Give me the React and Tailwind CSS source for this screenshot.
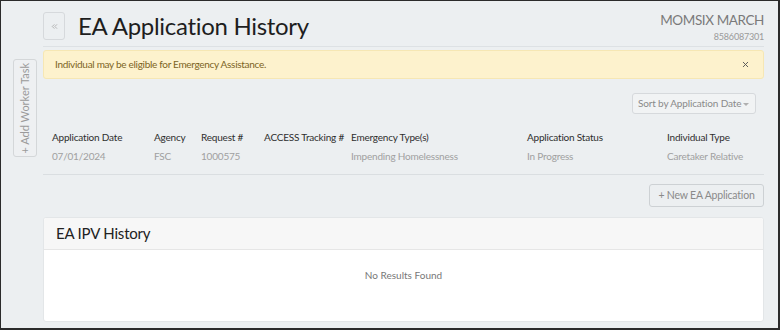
import { X, ChevronsLeft } from "lucide-react";

const columns = [
  { label: "Application Date", value: "07/01/2024", w: "w-[102px]" },
  { label: "Agency", value: "FSC", w: "w-[47px]" },
  { label: "Request #", value: "1000575", w: "w-[63px]" },
  { label: "ACCESS Tracking #", value: "", w: "w-[87px]" },
  { label: "Emergency Type(s)", value: "Impending Homelessness", w: "w-[176px]" },
  { label: "Application Status", value: "In Progress", w: "w-[140px]" },
  { label: "Individual Type", value: "Caretaker Relative", w: "w-[96px]" },
];

const App = () => {
  return (
    <div
      className="w-[780px] h-[330px] overflow-hidden bg-[#eceff1] border-t border-l border-r-2 border-b-2 border-[#2b2b2b] flex"
      style={{ fontFamily: "Lato, 'Open Sans', sans-serif" }}
    >
      {/* side tab */}
      <div className="w-[42px] shrink-0 pl-[12px] pt-[58px]">
        <button className="w-[24px] h-[98px] border border-[#d4d7d9] rounded-[3px] bg-[#eef0f2] flex items-center justify-center">
          <span className="-rotate-90 whitespace-nowrap text-[11px] text-[#9a9a9a]">+ Add Worker Task</span>
        </button>
      </div>

      <div className="flex-1 pr-[14px] pt-[11px]">
        {/* header */}
        <div className="flex justify-between items-start border-b border-[#dde1e4] pb-[3px]">
          <div className="flex items-center gap-[13px]">
            <button className="w-[22px] h-[28px] border border-[#d6d9dc] rounded-[3px] flex items-center justify-center text-[#a0a0a0]">
              <ChevronsLeft size={9} strokeWidth={2} />
            </button>
            <h1 className="text-[24px] leading-[28px] tracking-[-0.3px] text-[#1e1e1e]">EA Application History</h1>
          </div>
          <div className="text-right">
            <div className="text-[13.5px] leading-[16px] tracking-[-0.4px] text-[#7a7a7a]">MOMSIX MARCH</div>
            <div className="text-[9px] leading-[12px] tracking-[-0.2px] text-[#9a9a9a] mt-[3px]">8586087301</div>
          </div>
        </div>

        {/* alert */}
        <div className="mt-[3px] h-[29px] bg-[#fdf2cd] border border-[#f6e7b4] rounded-[3px] flex items-center justify-between pl-[11px] pr-[13px]">
          <span className="text-[10px] tracking-[-0.3px] text-[#7c6424]">Individual may be eligible for Emergency Assistance.</span>
          <X size={9} strokeWidth={2.5} className="text-[#555]" />
        </div>

        {/* sort */}
        <div className="flex justify-end mt-[14px] pr-[8px]">
          <div className="h-[21px] w-[124px] border border-[#d6d9dc] rounded-[3px] bg-[#f1f3f4] flex items-center justify-between pl-[5px] pr-[6px]">
            <span className="text-[10px] tracking-[-0.15px] text-[#8a8a8a] whitespace-nowrap">Sort by Application Date</span>
            <span className="w-0 h-0 border-l-[3px] border-r-[3px] border-t-[3px] border-l-transparent border-r-transparent border-t-[#b0b0b0] mt-[2px]"></span>
          </div>
        </div>

        {/* table */}
        <div className="flex pl-[9px] mt-[16px] border-b border-[#dadee1] pb-[11px]">
          {columns.map((c) => (
            <div key={c.label} className={c.w + " shrink-0"}>
              <div className="text-[10px] leading-[14px] tracking-[-0.2px] text-[#2e2e2e] whitespace-nowrap">{c.label}</div>
              <div className="text-[10px] leading-[14px] tracking-[-0.2px] text-[#a0a0a0] mt-[5px] whitespace-nowrap h-[14px]">{c.value}</div>
            </div>
          ))}
        </div>

        <div className="flex justify-end mt-[9px]">
          <button className="h-[23px] w-[115px] border border-[#cdd1d4] rounded-[3px] bg-[#eceff1] text-[10.5px] tracking-[-0.2px] text-[#8a8a8a]">
            + New EA Application
          </button>
        </div>

        {/* card */}
        <div className="mt-[10px] h-[105px] bg-white rounded-[3px] border border-[#e3e6e8] overflow-hidden">
          <div className="h-[32px] bg-[#f7f7f7] border-b border-[#e6e6e6] flex items-center pl-[12px]">
            <span className="text-[15px] tracking-[-0.2px] text-[#222]">EA IPV History</span>
          </div>
          <div className="flex justify-center pt-[18px]">
            <span className="text-[10px] text-[#777]">No Results Found</span>
          </div>
        </div>
      </div>
    </div>
  );
};

export default App;
